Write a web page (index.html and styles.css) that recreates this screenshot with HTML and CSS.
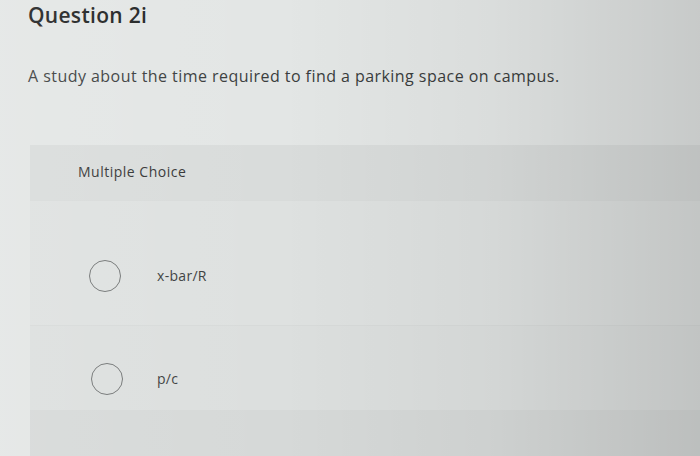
FILE: index.html
```html
<!DOCTYPE html>
<html>
<head>
<meta charset="utf-8">
<link rel="stylesheet" href="styles.css">
</head>
<body>
<div class="screen">
  <h1 class="title">Question 2i</h1>
  <p class="prompt">A study about the time required to find a parking space on campus.</p>
  <div class="panel">
    <div class="panel-head">Multiple Choice</div>
    <div class="option opt1"><span class="radio"></span><span class="label">x-bar/R</span></div>
    <div class="option opt2"><span class="radio"></span><span class="label">p/c</span></div>
    <div class="panel-foot"></div>
  </div>
  <div class="shade"></div>
</div>
</body>
</html>
```
FILE: styles.css
```css
html, body { margin: 0; padding: 0; }
body {
  width: 700px;
  height: 456px;
  overflow: hidden;
  background: #e3e6e5;
  font-family: "Open Sans", "Liberation Sans", sans-serif;
  color: #2e3131;
}
.screen {
  position: relative;
  width: 700px;
  height: 456px;
  display: flex;
  flex-direction: column;
}
.title {
  margin: 0;
  padding: 1px 0 0 28px;
  font-size: 21px;
  font-weight: 600;
  letter-spacing: 0.3px;
  line-height: 28px;
  color: #1f2222;
}
.prompt {
  margin: 0;
  padding: 37px 0 0 28px;
  font-size: 16px;
  letter-spacing: 0.45px;
  line-height: 20px;
  color: #3a3d3d;
}
.panel {
  margin: 59px 0 0 30px;
  flex: 1;
  display: flex;
  flex-direction: column;
  background: #dcdfde;
}
.panel-head {
  height: 55px;
  padding-left: 48px;
  padding-bottom: 2px;
  box-sizing: border-box;
  display: flex;
  align-items: center;
  font-size: 14px;
  letter-spacing: 0.5px;
  color: #333;
  background: #d9dcdb;
}
.option {
  display: flex;
  align-items: center;
  padding-left: 59px;
  box-sizing: border-box;
}
.opt1 { height: 125px; padding-top: 25px; background: #dee1e0; border-top: 1px solid #d8dbda; }
.opt2 { height: 85px; padding-top: 21px; background: #dcdfde; border-top: 1px solid #d7dad9; }
.radio {
  width: 32px;
  height: 32px;
  border: 1.5px solid #727575;
  border-radius: 50%;
  box-sizing: border-box;
  flex: none;
}
.opt2 .radio { margin-left: 2px; }
.label {
  margin-left: 36px;
  font-size: 14px;
  letter-spacing: 0.3px;
  color: #3a3d3d;
}
.opt2 .label { margin-left: 34px; }
.panel-foot {
  flex: 1;
  background: #d6d9d8;
}
.shade {
  position: absolute;
  inset: 0;
  pointer-events: none;
  background: linear-gradient(90deg, rgba(255,255,255,0.10) 0%, rgba(255,255,255,0) 40%, rgba(0,0,0,0.04) 70%, rgba(0,0,0,0.12) 100%);
}
```
